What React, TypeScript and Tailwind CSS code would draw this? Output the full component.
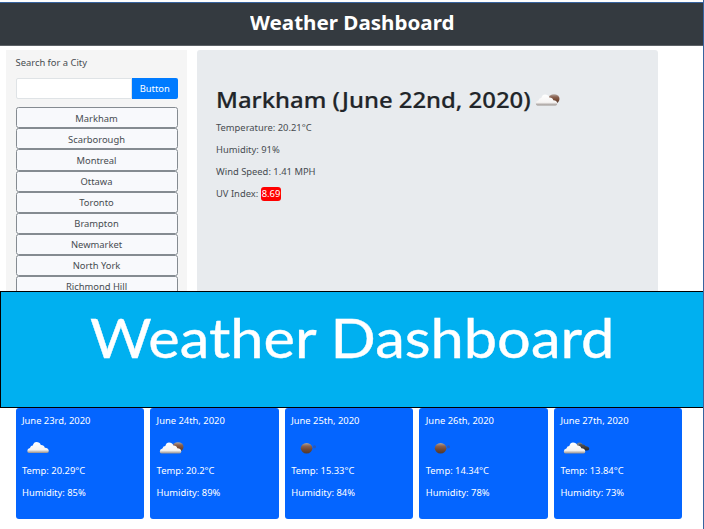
import React from "react";

const cities = ["Markham", "Scarborough", "Montreal", "Ottawa", "Toronto", "Brampton", "Newmarket", "North York", "Richmond Hill"];

type Sky = "cloud" | "partly" | "night" | "broken";

const forecast: { date: string; sky: Sky; temp: string; humidity: string }[] = [
  { date: "June 23rd, 2020", sky: "cloud", temp: "20.29", humidity: "85" },
  { date: "June 24th, 2020", sky: "partly", temp: "20.2", humidity: "89" },
  { date: "June 25th, 2020", sky: "night", temp: "15.33", humidity: "84" },
  { date: "June 26th, 2020", sky: "night", temp: "14.34", humidity: "78" },
  { date: "June 27th, 2020", sky: "broken", temp: "13.84", humidity: "73" },
];

function Defs() {
  return (
    <svg width="0" height="0" className="absolute">
      <defs>
        <linearGradient id="white" x1="0" y1="0" x2="0" y2="1">
          <stop offset="0" stopColor="#fff" />
          <stop offset=".72" stopColor="#f6f4f3" />
          <stop offset="1" stopColor="#99918d" />
        </linearGradient>
        <linearGradient id="moon" x1="0" y1="0" x2="0" y2="1">
          <stop offset="0" stopColor="#b3a7a0" />
          <stop offset=".3" stopColor="#8a6250" />
          <stop offset=".6" stopColor="#744934" />
          <stop offset="1" stopColor="#4d3a34" />
        </linearGradient>
        <linearGradient id="dark" x1="0" y1="0" x2="0" y2="1">
          <stop offset="0" stopColor="#5a5a5a" />
          <stop offset="1" stopColor="#242426" />
        </linearGradient>
      </defs>
    </svg>
  );
}

function WeatherIcon({ sky }: { sky: Sky }) {
  return (
    <svg viewBox="0 0 30 14" className="block h-[14px] w-[30px] shrink-0">
      {sky === "partly" && <ellipse cx="19" cy="6" rx="5.5" ry="4.8" fill="url(#moon)" />}
      {sky === "night" && (
        <>
          <circle cx="20.5" cy="5.8" r="1.5" fill="#39549c" opacity=".75" />
          <ellipse cx="12.6" cy="7.2" rx="5.8" ry="5.3" fill="url(#moon)" />
        </>
      )}
      {sky === "broken" && (
        <>
          <circle cx="16.5" cy="4.2" r="2.8" fill="#777b82" />
          <path d="M15 5Q17 1.5 19.5 3.5Q21.5 3 22.5 5Q26.3 5.7 26.3 8Q26 9.5 23.5 9.5H16Z" fill="url(#dark)" />
        </>
      )}
      {sky !== "night" && (
        <path
          transform={sky === "cloud" ? "translate(1.5 -.5)" : undefined}
          d="M2.5 12.4Q.8 12.4 .8 10.4Q.8 8 3.4 7.4Q4.2 5 6.3 5Q7.3 1.6 10 1.6Q13.2 1.6 14.3 4.4Q17.5 4.2 18.3 7.2Q21.8 7.4 22.3 10.2Q22.4 12.4 20.5 12.4Z"
          fill="url(#white)"
        />
      )}
    </svg>
  );
}

const body = "whitespace-nowrap text-[9.4px] leading-[22px]";

export default function App() {
  return (
    <div className="relative flex h-[529px] w-[704px] flex-col overflow-hidden border-r border-[#38649f] bg-white pt-[2px] font-['Noto_Sans','Open_Sans',sans-serif] text-[#474c51]">
      <Defs />
      <header className="flex h-[44px] shrink-0 items-center justify-center border-t border-b border-t-[#38649f] border-b-[#5d6267] bg-[#343a40] pb-[2px] pl-[1px]">
        <h1 className="scale-x-[1.073] text-[19.2px] leading-none font-bold whitespace-nowrap text-white">Weather Dashboard</h1>
      </header>
      <main className="flex h-[245px] shrink-0 gap-[10px] pt-[4px] pl-[6px]">
        <aside className="w-[180.5px] shrink-0 bg-[#f5f5f5] pr-[9px] pl-[9.5px]">
          <p className={`${body} pt-[1.5px]`}>Search for a City</p>
          <div className="mt-[4.5px] flex h-[21px]">
            <input aria-label="City" className="min-w-0 flex-1 rounded-l-[2px] border border-[#dfe3e6] bg-white" />
            <button className="w-[45.5px] rounded-r-[2px] bg-[#007bff] text-[9.4px] leading-none text-white">Button</button>
          </div>
          <ul className="mt-[8.4px]">
            {cities.map((city) => (
              <li key={city} className="flex h-[21.05px] items-center justify-center rounded-[2.5px] border border-[#858b91] bg-[#f8f9fc] pt-px text-[9.4px] leading-none">
                {city}
              </li>
            ))}
          </ul>
        </aside>
        <section className="w-[461px] rounded-t-[3px] bg-[#e8ebee] pt-[36.5px] pl-[19.5px]">
          <div className="flex h-[30px] items-center pb-[3px]">
            <div className="w-[319px]">
              <h2 className="inline-block origin-left scale-x-[1.085] text-[22px] leading-[26px] font-medium whitespace-nowrap text-[#212529] [-webkit-text-stroke:0.2px_#212529]">
                Markham (June 22nd, 2020)
              </h2>
            </div>
            <WeatherIcon sky="partly" />
          </div>
          <p className={body}>Temperature: 20.21°C</p>
          <p className={body}>Humidity: 91%</p>
          <p className={body}>Wind Speed: 1.41 MPH</p>
          <p className={body}>
            UV Index: <span className="inline-block rounded-[3px] bg-[#f00] px-[1px] leading-[14px] text-white">8.69</span>
          </p>
        </section>
      </main>
      <section className="-mr-px flex h-[117px] shrink-0 items-start justify-center border border-black bg-[#00b0f0] pt-[10px]">
        <p className="scale-x-[1.083] font-['Lato',sans-serif] text-[55px] leading-[70px] whitespace-nowrap text-white [-webkit-text-stroke:0.4px_white]">
          Weather Dashboard
        </p>
      </section>
      <section className="flex h-[110.5px] shrink-0 gap-[6.1px] pl-[15.5px] text-white">
        {forecast.map((day) => (
          <article key={day.date} className="w-[128.5px] shrink-0 rounded-[3px] bg-[#0465ff] pt-[1.5px] pl-[6.5px]">
            <p className={body}>{day.date}</p>
            <div className="flex h-[28px] items-center pt-[4px] pl-[2.5px]"><WeatherIcon sky={day.sky} /></div>
            <p className={body}>Temp: {day.temp}°C</p>
            <p className={body}>Humidity: {day.humidity}%</p>
          </article>
        ))}
      </section>
    </div>
  );
}
